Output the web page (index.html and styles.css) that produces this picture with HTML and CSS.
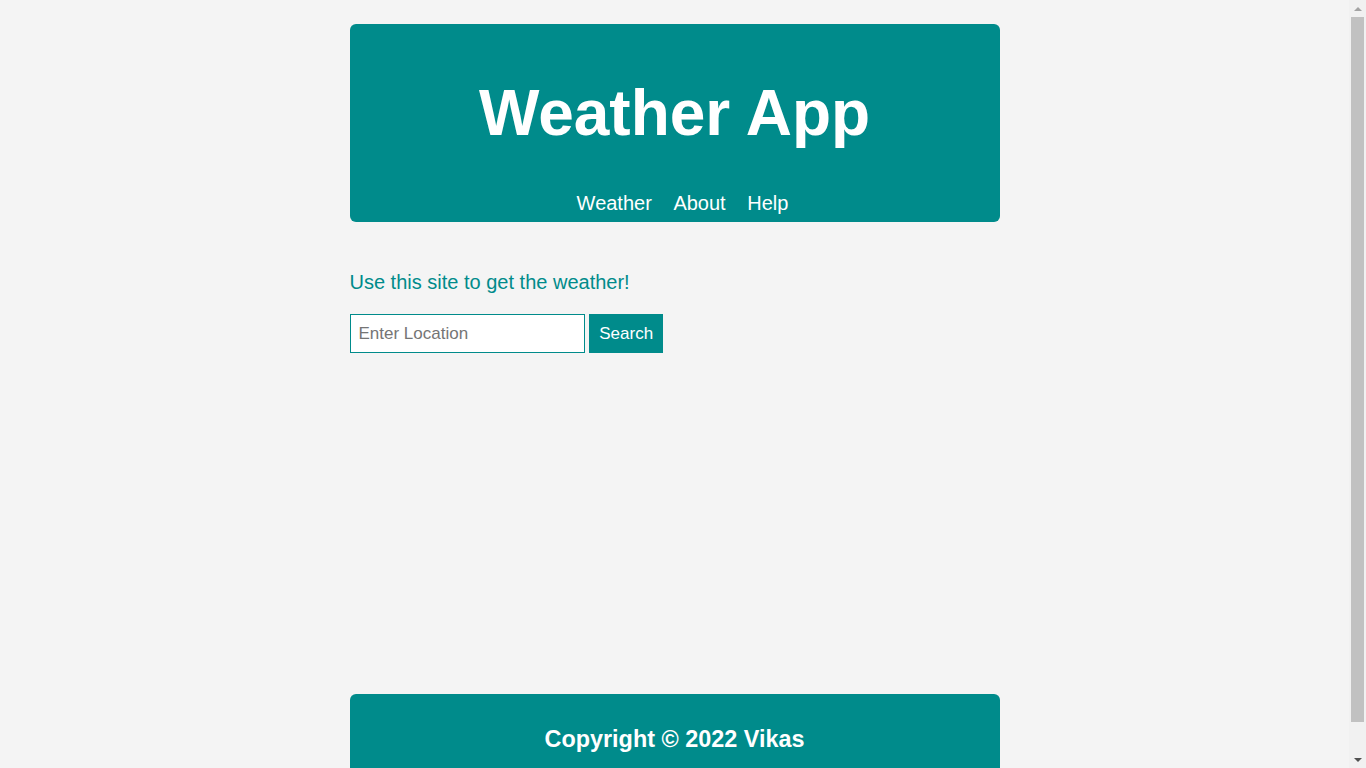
FILE: index.html
```html
<!DOCTYPE html>
<html lang="en">
<head>
<meta charset="utf-8">
<title>Weather App</title>
<link rel="stylesheet" href="styles.css">
</head>
<body>
<div class="page">
  <header class="header">
    <h1 class="title">Weather App</h1>
    <nav class="nav">
      <a href="#" class="nav-link">Weather</a>
      <a href="#" class="nav-link">About</a>
      <a href="#" class="nav-link">Help</a>
    </nav>
  </header>
  <main class="main">
    <p class="intro">Use this site to get the weather!</p>
    <form class="search-form">
      <input class="search-input" type="text" placeholder="Enter Location"> <button class="search-btn" type="button">Search</button>
    </form>
  </main>
  <footer class="footer">
    <h2 class="copyright">Copyright © 2022 Vikas</h2>
  </footer>
</div>
<div class="scrollbar" aria-hidden="true">
  <span class="sb-arrow sb-up"></span>
  <span class="sb-track"><span class="sb-thumb"></span></span>
  <span class="sb-arrow sb-down"></span>
</div>
</body>
</html>
```
FILE: styles.css
```css
html, body {
  margin: 0;
  padding: 0;
}
body {
  background: #f4f4f4;
  font-family: "Liberation Sans", Arial, sans-serif;
  color: #008b8b;
  padding-right: 17px;
}
.page {
  width: 650px;
  margin: 0 auto;
  padding: 24px 0 16px;
}
.header {
  background: #008b8b;
  border-radius: 6px;
  padding: 52px 0 7px;
  text-align: center;
  color: #fff;
}
.title {
  margin: 0 0 42px;
  font-size: 64px;
  line-height: 74px;
  font-weight: bold;
}
.nav {
  text-align: center;
  font-size: 20px;
  line-height: 23px;
}
.nav-link {
  margin-left: 16px;
  color: #fff;
  text-decoration: none;
}
.main {
  padding-top: 49px;
  min-height: 472px;
  box-sizing: border-box;
}
.intro {
  margin: 0 0 20px;
  font-size: 20px;
  line-height: 23px;
}
.search-form {
  margin: 0;
  font-size: 17px;
}
.search-input {
  width: 235px;
  height: 39px;
  box-sizing: border-box;
  padding: 0 8px;
  border: 1px solid #008b8b;
  background: #fff;
  font-family: inherit;
  font-size: 17px;
  color: #333;
  vertical-align: top;
  outline: none;
}
.search-input::placeholder {
  color: #757575;
}
.search-btn {
  height: 39px;
  box-sizing: border-box;
  padding: 0 9px;
  border: 1px solid #008b8b;
  background: #008b8b;
  color: #fff;
  font-family: inherit;
  font-size: 17px;
  vertical-align: top;
  cursor: pointer;
}
.footer {
  background: #008b8b;
  border-radius: 6px;
  padding: 31px 0;
  text-align: center;
  color: #fff;
}
.copyright {
  margin: 0;
  font-size: 23.4px;
  line-height: 28px;
  font-weight: bold;
}

/* simulated classic scrollbar */
.scrollbar {
  position: fixed;
  top: 0;
  right: 0;
  width: 17px;
  height: 100vh;
  background: #f1f1f1;
  display: flex;
  flex-direction: column;
}
.sb-arrow {
  height: 17px;
  flex: none;
  display: flex;
  align-items: center;
  justify-content: center;
}
.sb-arrow::before {
  content: "";
  width: 0;
  height: 0;
  border-left: 4px solid transparent;
  border-right: 4px solid transparent;
}
.sb-up::before {
  border-bottom: 4px solid #a3a3a3;
}
.sb-down::before {
  border-top: 4px solid #505050;
}
.sb-track {
  flex: 1;
  padding: 0 2px;
  display: flex;
  flex-direction: column;
}
.sb-thumb {
  height: 705px;
  background: #c1c1c1;
}
```
